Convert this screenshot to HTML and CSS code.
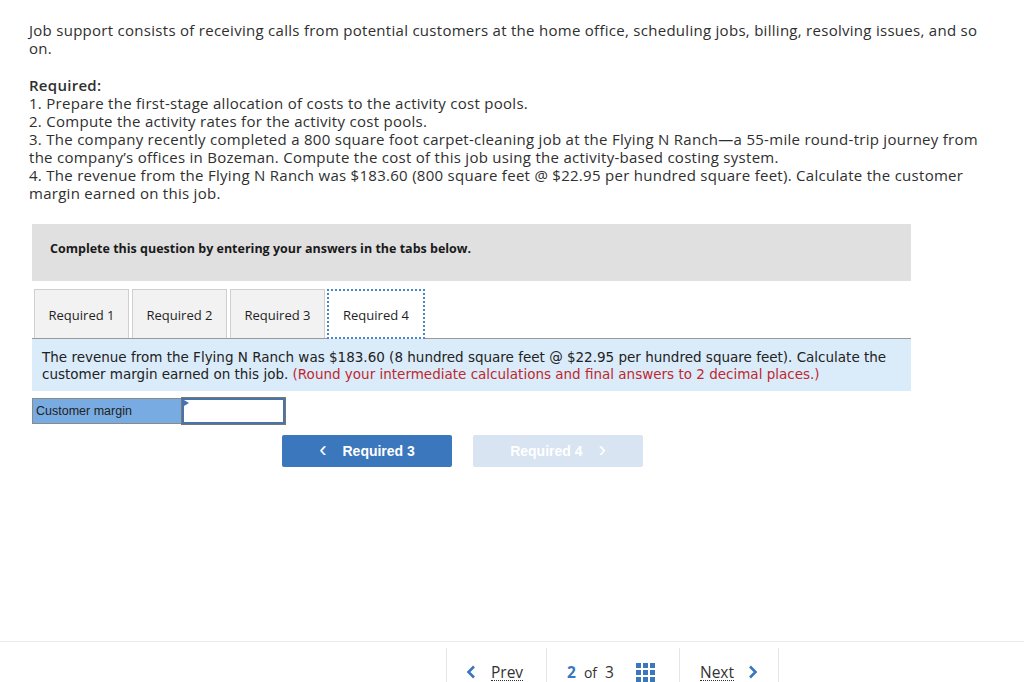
FILE: index.html
```html
<!DOCTYPE html>
<html>
<head>
<meta charset="utf-8">
<link rel="stylesheet" href="styles.css">
</head>
<body>
<div class="page">
  <div class="intro">
    <p class="para">Job support consists of receiving calls from potential customers at the home office, scheduling jobs, billing, resolving issues, and so on.</p>
    <p class="para"><strong class="req">Required:</strong><br>
    1. Prepare the first-stage allocation of costs to the activity cost pools.<br>
    2. Compute the activity rates for the activity cost pools.<br>
    3. The company recently completed a 800 square foot carpet-cleaning job at the Flying N Ranch—a 55-mile round-trip journey from the company’s offices in Bozeman. Compute the cost of this job using the activity-based costing system.<br>
    4. The revenue from the Flying N Ranch was $183.60 (800 square feet @ $22.95 per hundred square feet). Calculate the customer margin earned on this job.</p>
  </div>

  <div class="question">
    <div class="instruct">Complete this question by entering your answers in the tabs below.</div>
    <div class="tabs">
      <div class="tab">Required 1</div>
      <div class="tab">Required 2</div>
      <div class="tab">Required 3</div>
      <div class="tab active">Required 4</div>
    </div>
    <div class="prompt">The revenue from the Flying N Ranch was $183.60 (8 hundred square feet @ $22.95 per hundred square feet). Calculate the customer margin earned on this job. <span class="red">(Round your intermediate calculations and final answers to 2 decimal places.)</span></div>
    <div class="answer-row">
      <div class="label-cell">Customer margin</div>
      <div class="input-cell"><span class="marker"></span></div>
    </div>
    <div class="nav-buttons">
      <div class="btn btn-prev"><span class="chev">&lsaquo;</span>Required 3</div>
      <div class="btn btn-next">Required 4<span class="chev chev-r">&rsaquo;</span></div>
    </div>
  </div>
</div>

<div class="footer">
  <div class="fgroup">
    <div class="fcell prev">
      <svg class="arrow" width="10" height="14" viewBox="0 0 10 14"><path d="M8 1.5 L2.5 7 L8 12.5" fill="none" stroke="#3a77bc" stroke-width="2.6"/></svg>
      <span class="flink">Prev</span>
    </div>
    <div class="fcell mid">
      <span class="num">2</span><span class="of">of</span><span class="tot">3</span>
      <svg class="grid" width="19" height="19" viewBox="0 0 19 19">
        <rect x="0" y="0" width="5" height="5" fill="#3a77bc"/><rect x="7" y="0" width="5" height="5" fill="#3a77bc"/><rect x="14" y="0" width="5" height="5" fill="#3a77bc"/>
        <rect x="0" y="7" width="5" height="5" fill="#3a77bc"/><rect x="7" y="7" width="5" height="5" fill="#3a77bc"/><rect x="14" y="7" width="5" height="5" fill="#3a77bc"/>
        <rect x="0" y="14" width="5" height="5" fill="#3a77bc"/><rect x="7" y="14" width="5" height="5" fill="#3a77bc"/><rect x="14" y="14" width="5" height="5" fill="#3a77bc"/>
      </svg>
    </div>
    <div class="fcell next">
      <span class="flink">Next</span>
      <svg class="arrow" width="10" height="14" viewBox="0 0 10 14"><path d="M2 1.5 L7.5 7 L2 12.5" fill="none" stroke="#3a77bc" stroke-width="2.6"/></svg>
    </div>
  </div>
</div>
</body>
</html>
```
FILE: styles.css
```css
html, body {
  margin: 0;
  padding: 0;
  background: #fff;
}
body {
  width: 1024px;
  height: 682px;
  overflow: hidden;
  position: relative;
}
.page {
  padding: 21px 0 0 29px;
}
.intro {
  width: 960px;
  font-family: "Open Sans", sans-serif;
  font-size: 15px;
  letter-spacing: 0.28px;
  line-height: 18px;
  color: #2f2f2f;
}
.para {
  margin: 0 0 19px 0;
}
.para:last-child {
  margin-bottom: 0;
}
.req {
  font-weight: 600;
}
.question {
  margin: 22px 0 0 3px;
  width: 879px;
}
.instruct {
  background: #e0e0e0;
  height: 57px;
  box-sizing: border-box;
  padding: 16px 0 0 18px;
  font-family: "Open Sans", sans-serif;
  font-weight: 700;
  font-size: 12.5px;
  line-height: 18px;
  color: #1a1a1a;
}
.tabs {
  display: flex;
  gap: 3px;
  margin-top: 8px;
  padding-left: 2px;
  border-bottom: 1px solid #9a9a9a;
  height: 49px;
}
.tab {
  width: 95px;
  height: 49px;
  box-sizing: border-box;
  border: 1px solid #cfcfcf;
  border-bottom: none;
  background: #f2f2f2;
  font-family: "Open Sans", sans-serif;
  font-size: 13px;
  color: #1f1f1f;
  display: flex;
  align-items: center;
  justify-content: center;
  padding-top: 1px;
}
.tab.active {
  width: 98px;
  margin-left: -1px;
  background: #fff;
  border: 2px dotted #4a86c8;
  height: 50px;
  margin-bottom: -1px;
}
.prompt {
  background: #daebf9;
  padding: 10px 10px 8px 10px;
  font-family: "DejaVu Sans", Verdana, sans-serif;
  font-size: 13.5px;
  line-height: 17px;
  color: #222;
}
.red {
  color: #c0272d;
}
.answer-row {
  display: flex;
  margin-top: 7px;
  height: 26px;
}
.label-cell {
  width: 150px;
  box-sizing: border-box;
  background: #79abe3;
  border: 1px solid #8a8a8a;
  border-right: none;
  font-family: "Liberation Sans", Arial, sans-serif;
  font-size: 12.5px;
  line-height: 24px;
  padding-left: 3px;
  color: #222;
}
.input-cell {
  width: 103px;
  box-sizing: border-box;
  background: #fff;
  border: 2px solid #4a74a8;
  outline: 1px solid #777;
  position: relative;
}
.marker {
  position: absolute;
  left: 0;
  top: 0;
  width: 0;
  height: 0;
  border-top: 3px solid transparent;
  border-bottom: 3px solid transparent;
  border-left: 5px solid #3a77bc;
}
.nav-buttons {
  display: flex;
  gap: 21px;
  margin-top: 11px;
  padding-left: 250px;
}
.btn {
  width: 170px;
  height: 32px;
  border-radius: 2px;
  font-family: "Liberation Sans", Arial, sans-serif;
  font-weight: 700;
  font-size: 14px;
  color: #fff;
  display: flex;
  align-items: center;
  justify-content: center;
}
.btn-prev {
  background: #3a77bc;
}
.btn-next {
  background: #d8e4f2;
}
.chev {
  font-size: 22px;
  font-weight: 400;
  line-height: 20px;
  margin-right: 16px;
  margin-top: -3px;
}
.chev-r {
  margin-right: 0;
  margin-left: 16px;
}
.footer {
  position: absolute;
  left: 0;
  top: 641px;
  width: 1024px;
  height: 41px;
  border-top: 1px solid #ececec;
}
.fgroup {
  display: flex;
  margin-left: 446px;
  margin-top: 6px;
  height: 40px;
}
.fcell {
  border-left: 1px solid #e6e6e6;
  display: flex;
  align-items: center;
  padding-top: 8px;
  box-sizing: border-box;
  font-family: "Open Sans", sans-serif;
  font-size: 15.5px;
  color: #333;
}
.fcell.prev {
  width: 100px;
  padding-left: 19px;
}
.fcell.prev .arrow {
  margin-right: 15px;
}
.fcell.mid {
  width: 133px;
  padding-left: 20px;
}
.fcell.next {
  width: 100px;
  padding-left: 20px;
  border-right: 1px solid #e6e6e6;
}
.fcell.next .arrow {
  margin-left: 14px;
}
.flink {
  border-bottom: 1px dotted #333;
  line-height: 16px;
}
.num {
  color: #3a77bc;
  font-weight: 700;
}
.of {
  font-size: 14px;
  margin: 0 8px 0 8px;
}
.tot {
  margin-right: 22px;
}
.grid {
  margin-top: 0;
}
```
